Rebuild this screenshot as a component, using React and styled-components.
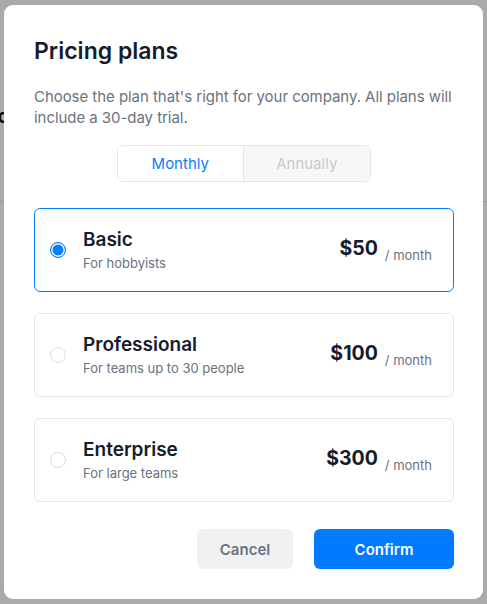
import React, { useState } from 'react';
import styled, { createGlobalStyle } from 'styled-components';

const GlobalStyle = createGlobalStyle`
  html, body {
    margin: 0;
    padding: 0;
    background: #ffffff;
    font-family: Inter, "Noto Sans", sans-serif;
  }
  * { box-sizing: border-box; }
`;

const plans = [
  { id: 'basic', name: 'Basic', note: 'For hobbyists', price: '$50' },
  { id: 'pro', name: 'Professional', note: 'For teams up to 30 people', price: '$100' },
  { id: 'ent', name: 'Enterprise', note: 'For large teams', price: '$300' },
];

const Page = styled.div`
  height: 604px;
  overflow: hidden;
`;

const PageHeader = styled.div`
  height: 202px;
  border-bottom: 1px solid #e8e8e8;
  padding: 104px 0 0;
  font-size: 20px;
  font-weight: 700;
  color: #111;
  margin-left: -14px;
`;

const Overlay = styled.div`
  position: fixed;
  inset: 0;
  background: rgba(0, 0, 0, 0.335);
  padding: 5px 4px;
`;

const Dialog = styled.div`
  width: 479px;
  height: 594px;
  background: #ffffff;
  border-radius: 9px;
  padding: 32px 30px 30px;
  display: flex;
  flex-direction: column;
`;

const Title = styled.h2`
  margin: 0 0 22px;
  font-size: 23px;
  line-height: 28px;
  font-weight: 600;
  color: #161c2d;
`;

const Description = styled.p`
  margin: 0 -8px 17px 0;
  font-size: 15px;
  line-height: 20.5px;
  color: #6b7280;
  letter-spacing: -0.05px;
`;

const Toggle = styled.div`
  align-self: center;
  display: flex;
  width: 254px;
  height: 37px;
  border: 1px solid #e6e6e6;
  border-radius: 6px;
  overflow: hidden;
  margin-bottom: 26px;
`;

const ToggleOption = styled.button`
  flex: 1;
  border: none;
  font-family: inherit;
  font-size: 15px;
  cursor: pointer;
  background: ${p => (p.$active ? '#ffffff' : '#f7f7f7')};
  color: ${p => (p.$active ? '#0a7cff' : '#c9c9c9')};
  & + & {
    border-left: 1px solid #e6e6e6;
  }
`;

const PlanList = styled.div`
  display: flex;
  flex-direction: column;
  gap: 21px;
  margin: 0 -1px 0 0;
`;

const PlanCard = styled.label`
  display: flex;
  align-items: center;
  height: 84px;
  padding: 0 21px 0 15px;
  border: 1px solid ${p => (p.$selected ? '#0a7cff' : '#e6e7ea')};
  border-radius: 6px;
  cursor: pointer;
`;

const Radio = styled.span`
  width: 16px;
  height: 16px;
  border-radius: 50%;
  flex: none;
  margin-right: 17px;
  border: 1px solid ${p => (p.$checked ? '#0a7cff' : '#dcdcdc')};
  background: ${p => (p.$checked ? '#0a7cff' : '#ffffff')};
  box-shadow: ${p => (p.$checked ? 'inset 0 0 0 1.5px #ffffff' : 'none')};
`;

const PlanText = styled.div`
  flex: 1;
  display: flex;
  flex-direction: column;
  gap: 4px;
`;

const PlanName = styled.span`
  font-size: 19px;
  line-height: 22px;
  font-weight: 600;
  color: #161c2d;
`;

const PlanNote = styled.span`
  font-size: 13px;
  line-height: 16px;
  color: #6b7280;
`;

const Price = styled.div`
  display: flex;
  align-items: baseline;
  gap: 7px;
  padding-top: 6px;
`;

const Amount = styled.span`
  font-size: 19.5px;
  font-weight: 700;
  color: #161c2d;
  position: relative;
  top: -5px;
`;

const Period = styled.span`
  font-size: 13px;
  color: #6b7280;
`;

const Footer = styled.div`
  margin-top: auto;
  display: flex;
  justify-content: flex-end;
  gap: 21px;
  margin-right: -1px;
`;

const Button = styled.button`
  height: 40px;
  width: ${p => (p.$primary ? '140px' : '96px')};
  border: none;
  border-radius: 6px;
  font-family: inherit;
  font-size: 15px;
  font-weight: 600;
  cursor: pointer;
  background: ${p => (p.$primary ? '#007aff' : '#f0f1f3')};
  color: ${p => (p.$primary ? '#ffffff' : '#6b7280')};
`;

export default function App() {
  const [period, setPeriod] = useState('monthly');
  const [selected, setSelected] = useState('basic');

  return (
    <>
      <GlobalStyle />
      <Page>
        <PageHeader>Lo</PageHeader>
      </Page>
      <Overlay>
        <Dialog>
          <Title>Pricing plans</Title>
          <Description>
            Choose the plan that's right for your company. All plans will include a 30-day trial.
          </Description>
          <Toggle>
            <ToggleOption $active={period === 'monthly'} onClick={() => setPeriod('monthly')}>
              Monthly
            </ToggleOption>
            <ToggleOption $active={period === 'annually'} onClick={() => setPeriod('annually')}>
              Annually
            </ToggleOption>
          </Toggle>
          <PlanList>
            {plans.map(plan => (
              <PlanCard
                key={plan.id}
                $selected={selected === plan.id}
                onClick={() => setSelected(plan.id)}
              >
                <Radio $checked={selected === plan.id} />
                <PlanText>
                  <PlanName>{plan.name}</PlanName>
                  <PlanNote>{plan.note}</PlanNote>
                </PlanText>
                <Price>
                  <Amount>{plan.price}</Amount>
                  <Period>/ month</Period>
                </Price>
              </PlanCard>
            ))}
          </PlanList>
          <Footer>
            <Button>Cancel</Button>
            <Button $primary>Confirm</Button>
          </Footer>
        </Dialog>
      </Overlay>
    </>
  );
}
